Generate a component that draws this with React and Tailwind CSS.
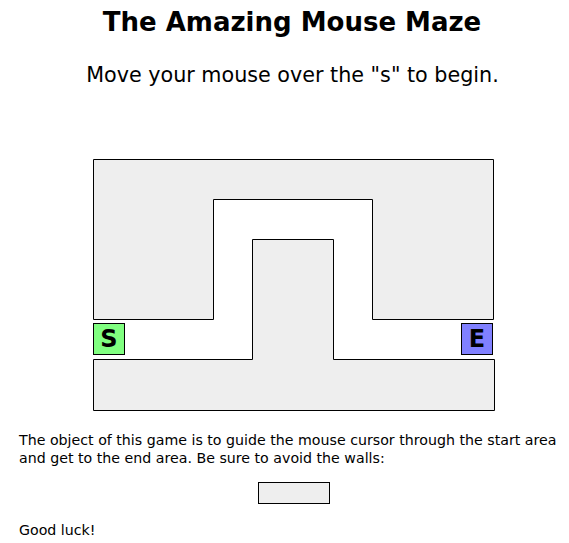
import React from 'react';

const font = { fontFamily: '"DejaVu Sans", sans-serif' };

const Maze = () => (
  <div className="relative w-[403px] h-[253px]">
    <svg width="403" height="253" className="absolute left-0 top-0">
      {/* top wall */}
      <polygon
        points="0.5,0.5 400.5,0.5 400.5,160.5 279.5,160.5 279.5,40.5 120.5,40.5 120.5,160.5 0.5,160.5"
        fill="#eeeeee"
        stroke="#000"
        strokeWidth="1"
      />
      {/* bottom wall */}
      <polygon
        points="0.5,200.5 159.5,200.5 159.5,80.5 240.5,80.5 240.5,200.5 401.5,200.5 401.5,251.5 0.5,251.5"
        fill="#eeeeee"
        stroke="#000"
        strokeWidth="1"
      />
    </svg>
    <div className="absolute left-0 top-[164px] w-[32px] h-[32px] border border-black bg-[#80ff80] flex items-center justify-center text-[24px] font-bold text-black leading-none">
      S
    </div>
    <div className="absolute left-[368px] top-[164px] w-[32px] h-[32px] border border-black bg-[#8080ff] flex items-center justify-center text-[24px] font-bold text-black leading-none">
      E
    </div>
  </div>
);

export default function App() {
  return (
    <div className="w-[569px] h-[543px] bg-white text-black overflow-hidden" style={font}>
      <h1 className="mt-[6px] text-center text-[26px] leading-[32px] font-bold pl-[15px]">
        The Amazing Mouse Maze
      </h1>
      <p className="mt-[23px] text-center text-[20.7px] leading-[28px] pl-[16px]">
        Move your mouse over the "s" to begin.
      </p>

      <div className="mt-[70px] ml-[93px]">
        <Maze />
      </div>

      <p className="mt-[19px] ml-[19px] text-[14.2px] leading-[18px] whitespace-nowrap">
        The object of this game is to guide the mouse cursor through the start area
        <br />
        and get to the end area. Be sure to avoid the walls:
      </p>

      <div className="mt-[15px] flex justify-center pl-[18px]">
        <div className="w-[72px] h-[22px] border border-black bg-[#eeeeee]" />
      </div>

      <p className="mt-[17px] ml-[19px] text-[14.2px] leading-[18px]">Good luck!</p>
    </div>
  );
}
